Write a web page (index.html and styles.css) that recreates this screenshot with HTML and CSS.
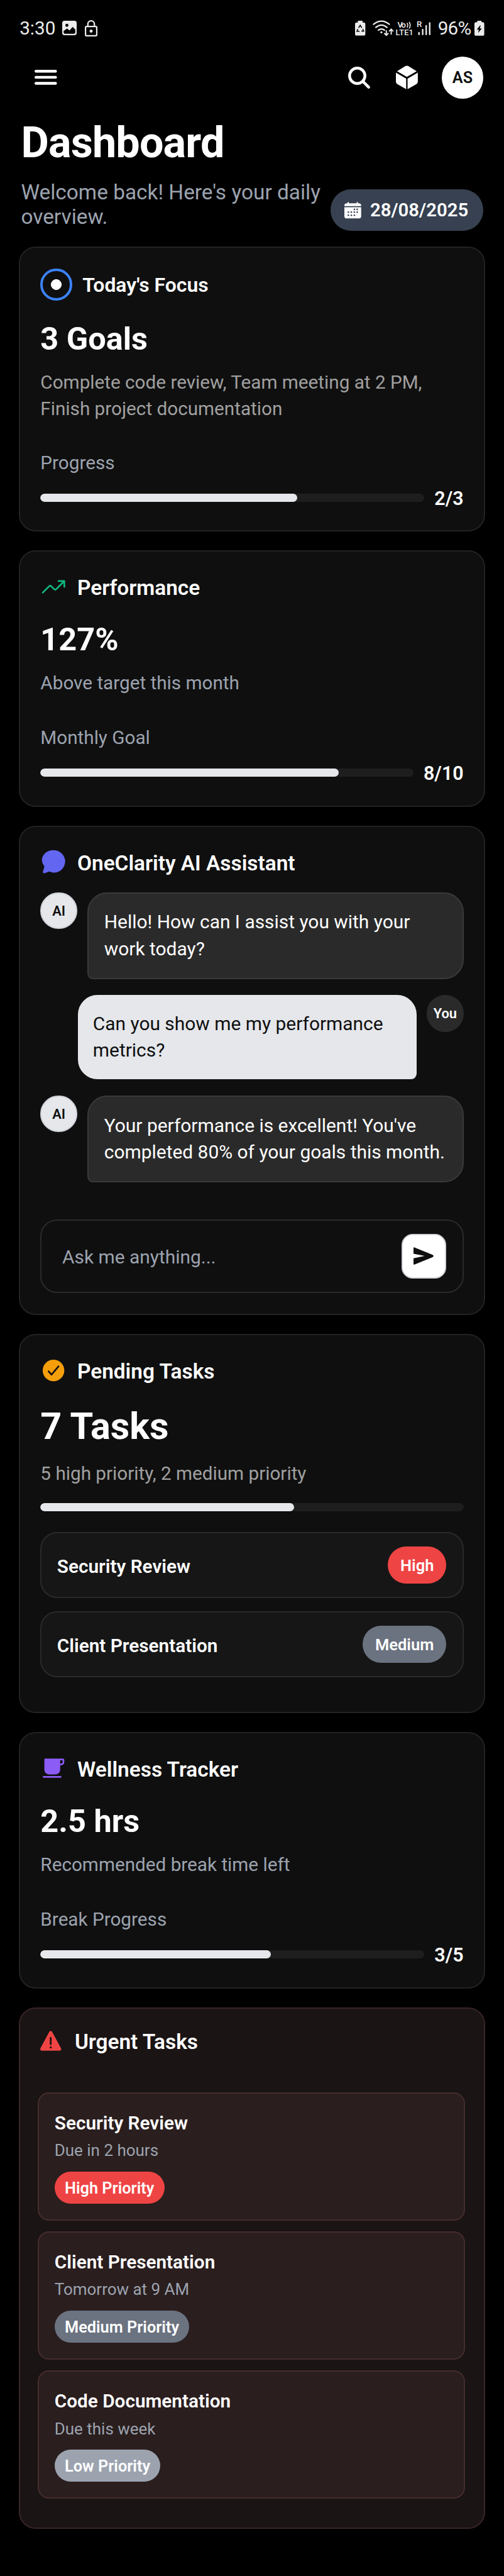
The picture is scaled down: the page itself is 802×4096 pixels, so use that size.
FILE: index.html
```html
<!DOCTYPE html>
<html lang="en">
<head>
<meta charset="utf-8">
<title>Dashboard</title>
<link rel="stylesheet" href="styles.css">
</head>
<body>
<div class="status">
  <span class="status-time">3:30</span>
  <svg class="i-pic" viewBox="0 0 31 31"><path fill="#ececec" fill-rule="evenodd" d="M5 0h21a5 5 0 0 1 5 5v21a5 5 0 0 1-5 5H5a5 5 0 0 1-5-5V5a5 5 0 0 1 5-5zM10 6.500a3.300 3.300 0 1 0 0 6.600a3.300 3.300 0 0 0 0-6.600zM3 22v3q0 3 3 3h19q3 0 3-3v-6l-5.500-6-7 8-5-4.500z"/></svg>
  <svg class="i-lock" viewBox="0 0 27 35"><g fill="none" stroke="#ececec" stroke-width="3"><rect x="1.500" y="13.500" width="24" height="20" rx="2"/><path d="M6.500 13.500V8.500a7 7 0 0 1 14 0v5"/></g><circle cx="13.500" cy="23.500" r="3.300" fill="#ececec"/></svg>
  <svg class="i-net" viewBox="0 0 162 36">
    <path fill="#ececec" d="M6 2.500h0V1.500h10V5h2.500a3.500 3.500 0 0 1 3.500 3.500v21a3.500 3.500 0 0 1-3.500 3.500h-15A3.500 3.500 0 0 1 0 29.500v-21A3.500 3.500 0 0 1 3.500 5H6z"/>
    <path fill="none" stroke="#000" stroke-width="2" d="M7.500 16.500L11 11l3.500 5.500M16.500 19l2 4.500h-5M9.500 24H4l2-5"/>
    <g fill="none" stroke="#ececec" stroke-width="3" stroke-linecap="round"><path d="M39.500 9q17-13.500 34 0M44.500 15.500q12-9.500 24 0M50 21.500q7-5 13 0"/></g>
    <circle cx="56.500" cy="26" r="2.200" fill="#ececec"/>
    <path fill="none" stroke="#ececec" stroke-width="2.600" d="M67 22v10M62.500 28l4.500 4.500 4.500-4.500M77.500 31V20M73 24l4.500-4.500L82 24"/>
    <g fill="#ececec" font-family="Roboto, sans-serif" font-weight="500"><text x="91" y="16" font-size="17.500" textLength="18">Vo</text><text x="87" y="33" font-size="17" textLength="38">LTE1</text><text x="132" y="15" font-size="18">R</text></g>
    <path fill="none" stroke="#ececec" stroke-width="2.200" d="M111.500 6q3 5 0 10M116 4q4.500 7 0 14"/>
    <g stroke="#ececec" stroke-width="3.200" stroke-linecap="round"><path d="M137 27v3.500M145 20v10.500M152.500 12v18.500M160 6v24.500"/></g>
  </svg>
  <span class="status-pct">96%</span>
  <svg class="i-batt" viewBox="0 0 21 32"><path fill="#ececec" d="M6 0h9v3h2.500A3.500 3.500 0 0 1 21 6.500v22a3.500 3.500 0 0 1-3.500 3.500h-14A3.500 3.500 0 0 1 0 28.500v-22A3.500 3.500 0 0 1 3.500 3H6z"/><path fill="#000" d="M12 10L5 18.800h4.200L8 26l7.800-9.500h-4.500l2.200-6.500z"/></svg>
</div>

<nav class="topbar">
  <svg class="i-menu" viewBox="0 0 48 32"><path stroke="#fff" stroke-width="6" stroke-linecap="round" d="M3 3h42M3 16h42M3 29h42"/></svg>
  <svg class="i-search" viewBox="0 0 47 47"><circle cx="19.500" cy="19.500" r="16.500" fill="none" stroke="#fff" stroke-width="6"/><path stroke="#fff" stroke-width="6" stroke-linecap="round" d="M32 32l12 12"/></svg>
  <svg class="i-cube" viewBox="0 0 47 51"><g fill="#fff"><path d="M2.600 12.500L20.500 1.500q3-1.600 6 0l18 11-21 12.200z"/><path d="M0 15.500L22 28.200V51L3 40.200q-3-1.800-3-5z"/><path d="M47 15.500L25 28.200V51l19-10.800q3-1.800 3-5z"/></g></svg>
  <div class="user">AS</div>
</nav>

<header class="hero">
  <h1>Dashboard</h1>
  <div class="hero-row">
    <p class="hero-sub">Welcome back! Here's your daily<br>overview.</p>
    <div class="date">
      <svg class="i-cal" viewBox="0 0 36 36"><path fill="#fff" d="M0 8a5 5 0 0 1 5-5h2V1.200a1.200 1.200 0 0 1 2.600 0V3h16.800V1.200a1.200 1.200 0 0 1 2.600 0V3H31a5 5 0 0 1 5 5v1H0zM0 11.500h36v19a5 5 0 0 1-5 5H5a5 5 0 0 1-5-5z"/><g fill="#374151"><circle cx="21.500" cy="16" r="1.700"/><circle cx="27.500" cy="16" r="1.700"/><circle cx="8.500" cy="22" r="1.700"/><circle cx="15" cy="22" r="1.700"/><circle cx="21.500" cy="22" r="1.700"/><circle cx="27.500" cy="22" r="1.700"/><circle cx="8.500" cy="28.500" r="1.700"/><circle cx="15" cy="28.500" r="1.700"/><circle cx="21.500" cy="28.500" r="1.700"/></g></svg>
      <span>28/08/2025</span>
    </div>
  </div>
</header>

<main class="cards">
  <section class="card card-focus">
    <div class="head"><span class="target"></span><h2>Today's Focus</h2></div>
    <div class="stat">3 Goals</div>
    <p class="desc neutral">Complete code review, Team meeting at 2 PM,<br>Finish project documentation</p>
    <div class="label">Progress</div>
    <div class="meter"><div class="bar"><i style="width:67%"></i></div><b>2/3</b></div>
  </section>

  <section class="card card-perf">
    <div class="head">
      <svg class="icon" viewBox="0 0 512 512" fill="none" stroke="#10b981" stroke-width="32" stroke-linecap="round" stroke-linejoin="round"><path d="M352 144h112v112"/><path d="M48 368l121.400-121.400a32 32 0 0 1 45.200 0l50.800 50.800a32 32 0 0 0 45.200 0L448 160"/></svg>
      <h2>Performance</h2>
    </div>
    <div class="stat">127%</div>
    <p class="desc">Above target this month</p>
    <div class="label">Monthly Goal</div>
    <div class="meter"><div class="bar"><i style="width:80%"></i></div><b>8/10</b></div>
  </section>

  <section class="card card-chat">
    <div class="head">
      <svg class="icon" viewBox="0 0 512 512"><path fill="#6366f1" d="M76.800 480a25.700 25.700 0 0 1-25.500-25.700 29 29 0 0 1 1.200-7.600L80 349.800a8 8 0 0 0-.6-6.100A215 215 0 0 1 32 226.400C32 121 128 32 256.400 32 362 32 450 104 474 199a215 215 0 0 1 6 49.700C480 368 387 467 272 467c-18.400 0-43.300-4.600-57-8.500s-27.200-8.900-30.700-10.200a31 31 0 0 0-11-2 30 30 0 0 0-12 2.400L91.700 476a44 44 0 0 1-14.900 4z"/></svg>
      <h2>OneClarity AI Assistant</h2>
    </div>
    <div class="chat">
      <div class="msg"><span class="who">AI</span><p class="bubble">Hello! How can I assist you with your<br>work today?</p></div>
      <div class="msg mine"><p class="bubble">Can you show me my performance<br>metrics?</p><span class="who">You</span></div>
      <div class="msg"><span class="who">AI</span><p class="bubble">Your performance is excellent! You've<br>completed 80% of your goals this month.</p></div>
    </div>
    <div class="ask">
      <span>Ask me anything...</span>
      <div class="send"><svg viewBox="0 0 43 38"><path fill="#0f0f0f" d="M0 2Q0 0 2 .6L41 16.500q4 2.500 0 5L2 37.400Q0 38 0 36V24l24-5L0 14z"/></svg></div>
    </div>
  </section>

  <section class="card card-pending">
    <div class="head">
      <svg class="icon" viewBox="0 0 512 512"><circle cx="256" cy="256" r="208" fill="#f59e0b"/><path d="M352 176L217.600 336 160 272" fill="none" stroke="#0f0f0f" stroke-width="32" stroke-linecap="round" stroke-linejoin="round"/></svg>
      <h2>Pending Tasks</h2>
    </div>
    <div class="stat stat-lg">7 Tasks</div>
    <p class="desc neutral">5 high priority, 2 medium priority</p>
    <div class="bar"><i style="width:60%"></i></div>
    <div class="rows">
      <div class="row"><span>Security Review</span><em class="badge high">High</em></div>
      <div class="row"><span>Client Presentation</span><em class="badge medium">Medium</em></div>
    </div>
  </section>

  <section class="card card-well">
    <div class="head">
      <svg class="icon" viewBox="0 0 512 512"><path fill="#8b5cf6" fill-rule="evenodd" d="M96 64h336a32 32 0 0 1 32 32v32c0 40-24 64-64 64h-16v88a88 88 0 0 1-88 88H168a88 88 0 0 1-88-88V80a16 16 0 0 1 16-16zM384 96v64h16c22 0 32-10 32-32V96zM64 400h330a16 16 0 0 1 0 32H64a16 16 0 0 1 0-32z"/></svg>
      <h2>Wellness Tracker</h2>
    </div>
    <div class="stat">2.5 hrs</div>
    <p class="desc">Recommended break time left</p>
    <div class="label">Break Progress</div>
    <div class="meter"><div class="bar"><i style="width:60%"></i></div><b>3/5</b></div>
  </section>

  <section class="card card-urgent">
    <div class="head">
      <svg class="icon" viewBox="0 0 512 512"><path fill="#ef4444" d="M449.100 399.100L278.600 82.600c-12-22.400-44.200-22.400-56.300 0L51.900 399.100A32 32 0 0 0 80 446.300h340.900a32 32 0 0 0 28.200-47.200z"/><path d="M250.500 198v120" stroke="#1a1414" stroke-width="34" stroke-linecap="round"/><circle cx="250.500" cy="380" r="20" fill="#1a1414"/></svg>
      <h2>Urgent Tasks</h2>
    </div>
    <div class="urgents">
      <article class="urgent"><h3>Security Review</h3><p>Due in 2 hours</p><span class="pill high">High Priority</span></article>
      <article class="urgent"><h3>Client Presentation</h3><p>Tomorrow at 9 AM</p><span class="pill medium">Medium Priority</span></article>
      <article class="urgent"><h3>Code Documentation</h3><p>Due this week</p><span class="pill low">Low Priority</span></article>
    </div>
  </section>
</main>
</body>
</html>
```

FILE: styles.css
```css
html { font-size: 7.4225px; background: #000; }
* { box-sizing: border-box; margin: 0; padding: 0; }
body { width: 100%; height: 4096px; overflow: hidden; background: #000; color: #fff; font-family: Roboto, sans-serif; font-size: 4rem; }
svg { display: block; flex: none; overflow: visible; }
h1, h2, h3 { font-weight: 600; white-space: nowrap; }

.status { display: flex; align-items: center; height: 12.1rem; padding: 0 4.2rem 0 4.2rem; color: #ececec; }
.status-time { font-size: 4rem; line-height: 5rem; width: 9.1rem; white-space: nowrap; }
.i-pic { width: 3.1rem; height: 3.1rem; }
.i-lock { width: 2.7rem; height: 3.5rem; margin-left: 1.8rem; }
.i-net { width: 16.2rem; height: 3.6rem; margin-left: auto; }
.status-pct { width: 7.9rem; margin-left: 1.5rem; font-size: 4rem; line-height: 5rem; letter-spacing: -.1rem; white-space: nowrap; }
.i-batt { width: 2.1rem; height: 3.2rem; }

.topbar { display: flex; align-items: center; height: 9rem; padding: 0 4.4rem 0 7.4rem; }
.i-menu { width: 4.8rem; height: 3.2rem; }
.i-search { width: 4.7rem; height: 4.7rem; margin-left: auto; }
.i-cube { width: 4.7rem; height: 5.1rem; margin: 0 5.1rem 0 5.5rem; }
.user { width: 9rem; height: 9rem; border-radius: 50%; background: #fff; color: #0f0f0f; font-size: 3.4rem; font-weight: 600; line-height: 9.2rem; text-align: center; }

.hero { height: 31.7rem; padding: 4.1rem 4.5rem 0 4.5rem; }
h1 { font-size: 9.2rem; line-height: 11rem; font-weight: 700; letter-spacing: -.11rem; }
.hero-row { display: flex; align-items: flex-start; justify-content: space-between; margin-top: 2.35rem; }
.hero-sub { font-size: 4.5rem; line-height: 5.3rem; color: #9ca3af; white-space: nowrap; }
.date { display: flex; align-items: center; width: 32.7rem; height: 8.8rem; margin-top: 2.05rem; padding-left: 3rem; border-radius: 4.4rem; background: #374151; font-size: 3.95rem; font-weight: 600; white-space: nowrap; }
.i-cal { width: 3.6rem; height: 3.6rem; margin-right: 1.9rem; }

.cards { display: flex; flex-direction: column; gap: 4rem; padding: 0 4rem; }
.card { border: .3rem solid #222; border-radius: 3.6rem; background: #0f0f0f; padding: 4.7rem 4.4rem 0; }
.card-focus { height: 61.1rem; padding-top: 4.5rem; }
.card-perf, .card-well { height: 54.95rem; }
.card-chat { height: 104.9rem; }
.card-pending { height: 81.3rem; }
.card-urgent { height: 111.7rem; padding: 4.1rem 4.05rem 0 3.85rem; border-color: #382525; background: #1a1414; }

.head { display: flex; align-items: center; gap: 2.2rem; height: 5.7rem; }
.icon { width: 5.7rem; height: 5.7rem; }
h2 { font-size: 4.5rem; line-height: 5rem; padding-top: .4rem; }
.card-focus .head { height: 6.8rem; }
.card-focus h2 { font-size: 4.3rem; }
.target { width: 6.8rem; height: 6.8rem; border: .6rem solid #3b82f6; border-radius: 50%; background: radial-gradient(circle, #fff 1.1rem, transparent 1.17rem); }

.stat { margin-top: 4.37rem; font-size: 6.8rem; line-height: 8rem; font-weight: 700; white-space: nowrap; }
.stat-lg { font-size: 8rem; line-height: 9.4rem; }
.card-focus .stat { margin-top: 4.2rem; }
.desc { margin-top: 2.6rem; font-size: 4rem; line-height: 5.65rem; color: #9ca3af; white-space: nowrap; }
.card-focus .desc { margin-top: 2.5rem; }
.desc.neutral { color: #a0a0a0; }
.label { margin-top: 6.25rem; font-size: 4rem; line-height: 5rem; color: #9ca3af; }
.meter { display: flex; align-items: center; gap: 2.2rem; margin-top: 2.7rem; line-height: 5rem; }
.meter b { font-size: 4.1rem; font-weight: 600; }
.bar { flex: 1; height: 1.75rem; border-radius: .9rem; background: #1e1e1e; overflow: hidden; }
.bar i { display: block; height: 100%; border-radius: .9rem; background: #e5e7eb; }
.meter .bar { margin-bottom: .3rem; }
.card-pending > .bar { margin-top: 3.55rem; }

.chat { display: flex; flex-direction: column; gap: 3.4rem; margin-top: 3.6rem; }
.msg { display: flex; align-items: flex-start; gap: 2.2rem; }
.msg.mine { justify-content: flex-end; }
.who { flex: none; width: 7.9rem; height: 7.9rem; border: .3rem solid #d1d5db; border-radius: 50%; background: #e5e7eb; color: #0f0f0f; font-size: 2.95rem; font-weight: 600; line-height: 7.6rem; text-align: center; }
.bubble { flex: 1; padding: 3.35rem 3.3rem; border: .3rem solid #3a3a3a; border-radius: 4.2rem 4.2rem 4.2rem 1.2rem; background: #2a2a2a; font-size: 4.03rem; line-height: 5.7rem; white-space: nowrap; }
.mine .bubble { flex: none; width: 80%; border: 0; padding: 3.35rem 3.2rem; border-radius: 4.2rem 4.2rem 1.2rem 4.2rem; background: #e5e7eb; color: #0f0f0f; }
.mine .who { border-color: #2a2a2a; background: #2a2a2a; color: #fff; }
.ask { display: flex; align-items: center; justify-content: space-between; height: 15.8rem; margin-top: 7.9rem; padding: 0 3.5rem 0 4.4rem; border: .3rem solid #2a2a2a; border-radius: 3.6rem; color: #9ca3af; font-size: 4.03rem; }
.ask span { padding-top: .3rem; }
.send { display: flex; align-items: center; width: 9.5rem; height: 9.6rem; padding-left: 2.3rem; border: .3rem solid #d1d5db; border-radius: 2.4rem; background: #fff; }
.send svg { width: 4.3rem; height: 3.8rem; }

.rows { display: flex; flex-direction: column; gap: 2.9rem; margin-top: 4.5rem; }
.row { display: flex; align-items: center; justify-content: space-between; height: 14.1rem; padding: 0 3.4rem 0 3.3rem; border: .3rem solid #2a2a2a; border-radius: 3.6rem; background: #161616; font-size: 4.01rem; font-weight: 600; }
.row span { padding-top: .4rem; }
.badge { height: 7.9rem; padding: 0 2.7rem; border-radius: 3.95rem; font-size: 3.44rem; font-style: normal; line-height: 8.1rem; }
.high { background: #ef4444; }
.medium { background: #6b7280; }
.low { background: #9ca3af; }

.urgents { display: flex; flex-direction: column; gap: 2.3rem; margin-top: 8.15rem; }
.urgent { display: flex; flex-direction: column; align-items: flex-start; height: 27.5rem; padding: 3.75rem 3.3rem 0; border: .3rem solid #452c2c; border-radius: 2.4rem; background: #2a1e1e; }
h3 { font-size: 4.01rem; line-height: 5rem; }
.urgent p { margin-top: 1.15rem; font-size: 3.5rem; line-height: 4.6rem; color: #9ca3af; }
.pill { height: 6.9rem; margin-top: 2.2rem; padding: 0 2.2rem; border-radius: 3.45rem; font-size: 3.41rem; font-weight: 600; line-height: 7.2rem; white-space: nowrap; }
```
